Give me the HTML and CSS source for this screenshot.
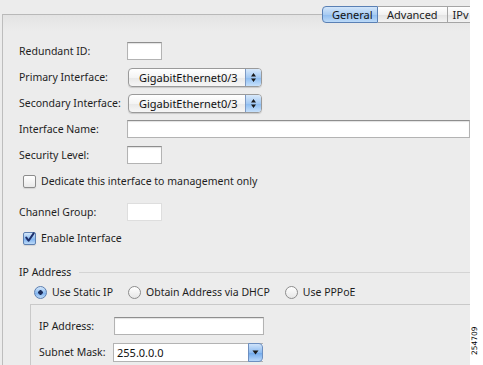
FILE: index.html
```html
<!DOCTYPE html>
<html>
<head>
<meta charset="utf-8">
<link rel="stylesheet" href="styles.css">
</head>
<body>
<div class="window">
  <div class="tabbar">
    <div class="tab tab-selected">General</div>
    <div class="tab">Advanced</div>
    <div class="tab tab-cut">IPv</div>
  </div>
  <div class="panel">
    <div class="row">
      <span class="label">Redundant ID:</span>
      <span class="field field-short"></span>
    </div>
    <div class="row">
      <span class="label">Primary Interface:</span>
      <span class="popup"><span class="popup-text">GigabitEthernet0/3</span><span class="popup-btn"><svg width="7" height="11" viewBox="0 0 7 11"><path d="M3.5 1 L6 4.5 H1 Z M3.5 10 L6 6.5 H1 Z" fill="#1a1a1a"/></svg></span></span>
    </div>
    <div class="row">
      <span class="label">Secondary Interface:</span>
      <span class="popup"><span class="popup-text">GigabitEthernet0/3</span><span class="popup-btn"><svg width="7" height="11" viewBox="0 0 7 11"><path d="M3.5 1 L6 4.5 H1 Z M3.5 10 L6 6.5 H1 Z" fill="#1a1a1a"/></svg></span></span>
    </div>
    <div class="row">
      <span class="label">Interface Name:</span>
      <span class="field field-long"></span>
    </div>
    <div class="row">
      <span class="label">Security Level:</span>
      <span class="field field-short"></span>
    </div>
    <div class="row row-check">
      <span class="checkbox"></span>
      <span class="check-text">Dedicate this interface to management only</span>
    </div>
    <div class="row row-gap">
      <span class="label">Channel Group:</span>
      <span class="field field-short field-flat"></span>
    </div>
    <div class="row row-check">
      <span class="checkbox checkbox-on"><svg width="12" height="12" viewBox="0 0 12 12"><path d="M2.5 5.5 L5 9 L10.5 1" fill="none" stroke="#1d2f6b" stroke-width="2.2" stroke-linecap="round" stroke-linejoin="round"/></svg></span>
      <span class="check-text">Enable Interface</span>
    </div>
    <div class="group-title"><span>IP Address</span><span class="group-line"></span></div>
    <div class="radios">
      <span class="radio radio-on"></span><span class="radio-text">Use Static IP</span>
      <span class="radio"></span><span class="radio-text">Obtain Address via DHCP</span>
      <span class="radio"></span><span class="radio-text">Use PPPoE</span>
    </div>
    <div class="inner">
      <div class="irow">
        <span class="ilabel">IP Address:</span>
        <span class="field field-ip"></span>
      </div>
      <div class="irow">
        <span class="ilabel">Subnet Mask:</span>
        <span class="combo"><span class="combo-text">255.0.0.0</span><span class="combo-btn"><svg width="7" height="5" viewBox="0 0 7 5"><path d="M0.5 0.5 H6.5 L3.5 4.5 Z" fill="#1a1a1a"/></svg></span></span>
      </div>
    </div>
  </div>
</div>
<div class="figno">254709</div>
</body>
</html>
```

FILE: styles.css
```css
* { box-sizing: border-box; }
html, body { margin: 0; padding: 0; background: #ffffff; }
body {
  position: relative;
  font-family: "Noto Sans", "DejaVu Sans", sans-serif;
  font-size: 10.5px;
  color: #1e1e1e;
}
.window {
  width: 470px;
  height: 365px;
  background: #ececec;
  overflow: hidden;
}
.tabbar {
  position: relative;
  z-index: 2;
  display: flex;
  padding: 6px 0 0 322px;
  height: 22px;
}
.tab {
  height: 17px;
  line-height: 15px;
  padding: 0 9px;
  border: 1px solid #a5a5a5;
  border-left: none;
  background: linear-gradient(#ffffff, #f1f1f1 50%, #e2e2e2 51%, #f3f3f3);
  color: #222;
  font-size: 11px;
}
.tab-selected {
  border: 1px solid #5a80b4;
  border-radius: 4px 0 0 4px;
  background: linear-gradient(#d3e6fa, #a9ccf2 50%, #8fbcef 51%, #bcdaf8);
  color: #111;
  width: 56px;
  padding: 0 9px;
}
.tab-cut { flex: 1; padding: 0 0 0 5px; border-right: none; white-space: nowrap; }
.panel {
  margin: -8px 0 0 2px;
  border-top: 1px solid #b8b8b8;
  border-left: 1px solid #bdbdbd;
  height: 365px;
  padding: 23px 0 0 16px;
  background: linear-gradient(#e3e3e3, #ececec 16px);
}
.row {
  display: flex;
  align-items: center;
  height: 26px;
}
.row-gap { margin-top: 5px; }
.label {
  width: 108px;
  flex: none;
}
.field {
  display: block;
  height: 18px;
  background: #fff;
  border: 1px solid #b3b3b3;
  border-top-color: #8e8e8e;
  box-shadow: inset 0 1px 1px rgba(0,0,0,0.12);
}
.field-short { width: 35px; }
.field-flat { border-color: #dedede; box-shadow: none; }
.field-long { width: 343px; height: 18px; }
.popup {
  display: flex;
  align-items: center;
  width: 134px;
  height: 19px;
  margin-left: 1px;
  border: 1px solid #9a9a9a;
  border-radius: 4px;
  background: linear-gradient(#ffffff, #f4f4f4 50%, #e8e8e8 51%, #f6f6f6);
  box-shadow: 0 1px 1px rgba(0,0,0,0.15);
  overflow: hidden;
}
.popup-text {
  flex: 1;
  padding-left: 10px;
  color: #111;
  font-size: 11px;
}
.popup-btn {
  width: 16px;
  height: 17px;
  display: flex;
  align-items: center;
  justify-content: center;
  border-left: 1px solid #7d9ac4;
  background: linear-gradient(#d8e9fb, #a3c9f3 50%, #8abbf0 51%, #c6e0fb);
}
.row-check { padding-left: 4px; }
.checkbox {
  width: 13px;
  height: 13px;
  border: 1px solid #8c8c8c;
  border-radius: 2px;
  background: linear-gradient(#ffffff, #e9e9e9);
  box-shadow: 0 1px 1px rgba(0,0,0,0.1);
  flex: none;
  display: flex;
  align-items: center;
  justify-content: center;
}
.checkbox-on {
  border-color: #5d7fb0;
  background: linear-gradient(#d6e8fb, #8fbdf0 50%, #79aeee 51%, #bcdaf8);
}
.check-text { margin-left: 5px; }
.group-title {
  display: flex;
  align-items: center;
  height: 16px;
  margin-top: 13px;
}
.group-line {
  flex: 1;
  height: 1px;
  background: #d4d4d4;
  margin-left: 8px;
}
.radios {
  display: flex;
  align-items: center;
  height: 24px;
  padding-left: 15px;
}
.radio {
  width: 13px;
  height: 13px;
  border: 1px solid #8c8c8c;
  border-radius: 50%;
  background: linear-gradient(#ffffff, #e6e6e6);
  flex: none;
}
.radio-on {
  border-color: #5d7fb0;
  background: radial-gradient(circle, #1c2e5c 0, #1c2e5c 2px, transparent 2.5px), linear-gradient(#d6e8fb, #8fbdf0 50%, #79aeee 51%, #bcdaf8);
}
.radio-text { margin: 0 15px 0 5px; }
.inner {
  margin-left: 11px;
  border-top: 1px solid #c9c9c9;
  border-left: 1px solid #c9c9c9;
  padding: 8px 0 0 8px;
  height: 80px;
}
.irow {
  display: flex;
  align-items: center;
  height: 26px;
}
.ilabel { width: 75px; flex: none; }
.field-ip { width: 150px; }
.combo {
  display: flex;
  align-items: center;
  width: 150px;
  height: 19px;
  margin-left: -1px;
  background: #fff;
  border: 1px solid #b3b3b3;
  border-right: none;
}
.combo-text { flex: 1; padding-left: 3px; color: #111; font-size: 11px; }
.combo-btn {
  width: 15px;
  height: 19px;
  display: flex;
  align-items: center;
  justify-content: center;
  border: 1px solid #6d8fc0;
  border-radius: 0 4px 4px 0;
  background: linear-gradient(#cfe3fa, #8dbbf0 50%, #6ea7ea 51%, #b9d8fa);
}
.figno {
  position: absolute;
  left: 470px;
  top: 355px;
  transform: rotate(-90deg);
  transform-origin: left top;
  font-family: "DejaVu Sans", sans-serif;
  font-size: 7.5px;
  line-height: 9px;
  color: #000;
  white-space: nowrap;
}
```
